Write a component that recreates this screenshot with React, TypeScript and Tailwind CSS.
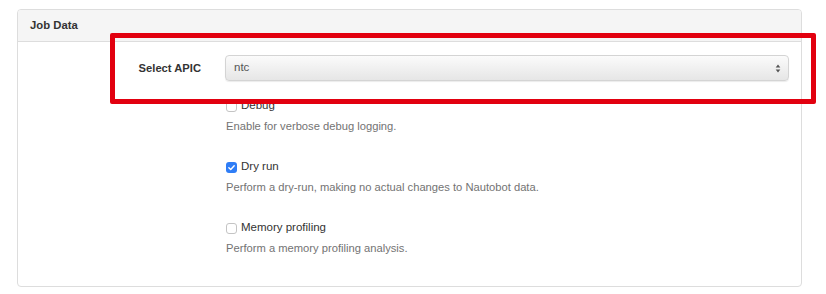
const font = { fontFamily: '"Liberation Sans", Arial, sans-serif' };

interface CheckRowProps {
  label: string;
  help: string;
  checked?: boolean;
}

const CheckRow = ({ label, help, checked = false }: CheckRowProps): JSX.Element => (
  <div className="flex flex-col">
    <label className="flex h-[20px] items-center gap-[4px] text-[11.5px] text-[#333]">
      {checked
        ? (
          <span className="flex size-[11px] items-center justify-center rounded-[3px] bg-[#2f7df6]">
            <svg viewBox="0 0 12 12" className="size-[9px]">
              <path d="M2.5 6.2 L5 8.6 L9.6 3.6" fill="none" stroke="white" strokeWidth="1.9" strokeLinecap="round" strokeLinejoin="round" />
            </svg>
          </span>
        )
        : <span className="size-[11px] rounded-[3px] border border-[#c4c4c4] bg-white" />}
      <span>{label}</span>
    </label>
    <p className="h-[20px] text-[11.2px] leading-[20px] text-[#737373]">{help}</p>
  </div>
);

export default function App() {
  return (
    <div className="relative h-[294px] w-[826px] bg-white" style={font}>
      <div className="pl-[17px] pt-[9px]">
        <div className="h-[278px] w-[785px] overflow-hidden rounded-[4px] border border-[#dddddd] bg-white">
          <div className="flex h-[32px] items-center border-b border-[#dddddd] bg-[#f5f5f5] px-[12px] text-[11.3px] font-bold text-[#333]">
            Job Data
          </div>
          <div className="flex flex-col pt-[13px]">
            <div className="flex items-center">
              <div className="w-[183px] text-right text-[11.2px] font-bold text-[#333]">Select APIC</div>
              <div className="ml-[24px] flex h-[26px] w-[564px] items-center justify-between rounded-[4px] border border-[#d4d4d4] bg-gradient-to-b from-[#fbfbfb] to-[#e6e6e6] pl-[8px] pr-[7px] text-[11.5px] text-[#555] shadow-[0_1px_1px_rgba(0,0,0,0.08)]">
                <span>ntc</span>
                <svg viewBox="0 0 6 10" className="h-[9px] w-[6px]">
                  <path d="M3 0.5 L5.6 4 L0.4 4 Z M3 9.5 L5.6 6 L0.4 6 Z" fill="#555" />
                </svg>
              </div>
            </div>
            <div className="ml-[208px] mt-[15px] flex flex-col gap-[21px]">
              <CheckRow label="Debug" help="Enable for verbose debug logging." />
              <CheckRow label="Dry run" help="Perform a dry-run, making no actual changes to Nautobot data." checked />
              <CheckRow label="Memory profiling" help="Perform a memory profiling analysis." />
            </div>
          </div>
        </div>
      </div>
      <div className="pointer-events-none absolute left-[110px] top-[33px] h-[71px] w-[706px] rounded-[2px] border-[5px] border-[#e2000f]" />
    </div>
  );
}
